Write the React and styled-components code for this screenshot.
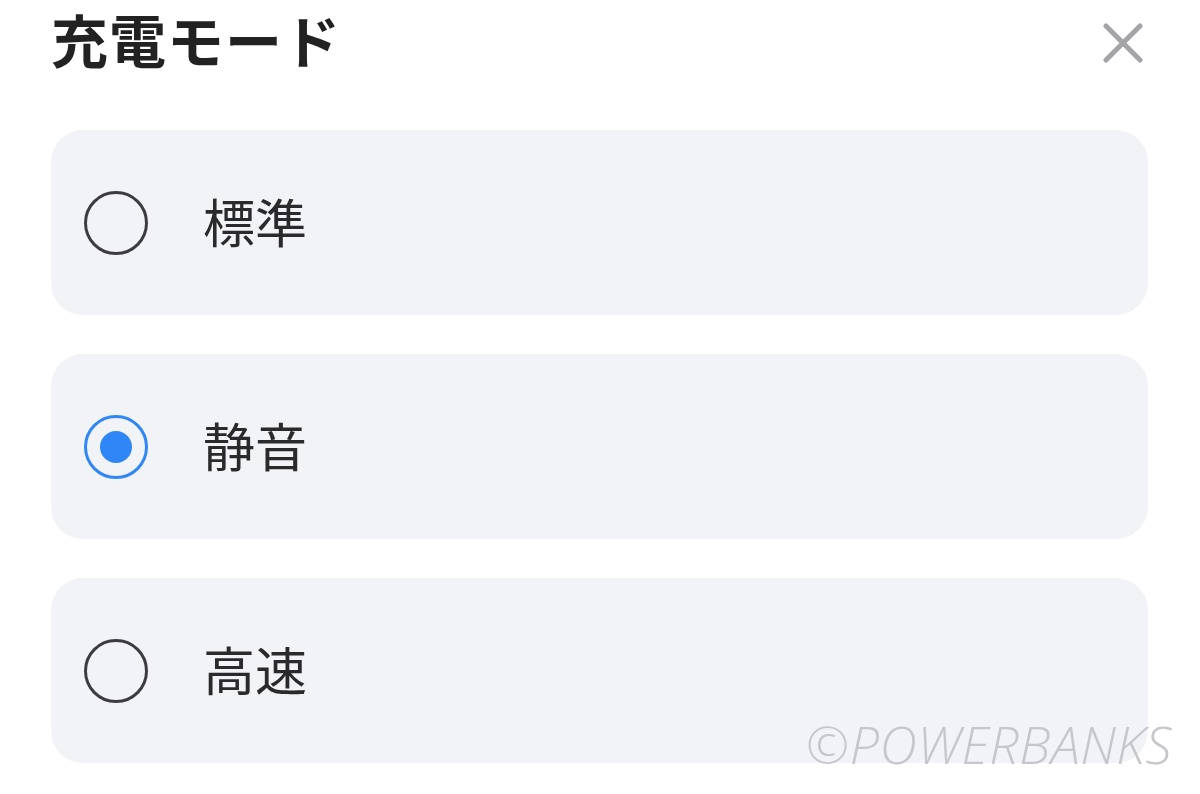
import React from "react";
import styled, { createGlobalStyle } from "styled-components";

const Global = createGlobalStyle`
  html, body { margin: 0; padding: 0; background: #ffffff; }
  body { font-family: "Noto Sans CJK JP", "Noto Sans", sans-serif; }
`;

const Page = styled.div`
  position: relative;
  width: 1200px;
  height: 794px;
  overflow: hidden;
  background: #ffffff;
  box-sizing: border-box;
  padding: 0 52px 0 51px;
`;

const Header = styled.div`
  display: flex;
  align-items: flex-start;
  justify-content: space-between;
  height: 130px;
  padding-top: 4px;
  box-sizing: border-box;
`;

const Title = styled.h1`
  margin: 0;
  font-size: 57px;
  line-height: 1.2;
  font-weight: 700;
  color: #222222;
  letter-spacing: 1px;
`;

const CloseButton = styled.button`
  border: 0;
  background: transparent;
  padding: 0;
  margin: 17px 3px 0 0;
  width: 44px;
  height: 44px;
  display: flex;
  align-items: center;
  justify-content: center;
  cursor: pointer;
`;

const List = styled.div`
  display: flex;
  flex-direction: column;
  gap: 39px;
`;

const Option = styled.label`
  display: flex;
  align-items: center;
  height: 185px;
  border-radius: 32px;
  background: #f2f3f7;
  padding-left: 33px;
  box-sizing: border-box;
  gap: 55px;
  cursor: pointer;
`;

const Radio = styled.span`
  width: 64px;
  height: 64px;
  border-radius: 50%;
  box-sizing: border-box;
  border: 3px solid ${(p) => (p.$checked ? "#2f86f6" : "#3c3c40")};
  display: flex;
  align-items: center;
  justify-content: center;
  flex-shrink: 0;
  &::after {
    content: "";
    display: ${(p) => (p.$checked ? "block" : "none")};
    width: 32px;
    height: 32px;
    border-radius: 50%;
    background: #2f86f6;
  }
`;

const Label = styled.span`
  font-size: 52px;
  line-height: 1;
  color: #2a2a2c;
  font-weight: 400;
  margin-top: -4px;
`;

const Watermark = styled.div`
  position: absolute;
  right: 28px;
  bottom: 24px;
  font-family: "Open Sans", "Liberation Sans", sans-serif;
  font-style: italic;
  font-weight: 300;
  font-size: 52px;
  line-height: 1;
  color: #c6c7cb;
  letter-spacing: 0.5px;
  pointer-events: none;
`;

const options = [
  { id: "standard", label: "標準" },
  { id: "silent", label: "静音" },
  { id: "fast", label: "高速" },
];

export default function App() {
  const [value, setValue] = React.useState("silent");
  return (
    <>
      <Global />
      <Page>
        <Header>
          <Title>充電モード</Title>
          <CloseButton aria-label="close">
            <svg width="40" height="40" viewBox="0 0 40 40">
              <path
                d="M3 3 L37 37 M37 3 L3 37"
                stroke="#a3a3a8"
                strokeWidth="5"
                strokeLinecap="round"
                fill="none"
              />
            </svg>
          </CloseButton>
        </Header>
        <List>
          {options.map((o) => (
            <Option key={o.id} onClick={() => setValue(o.id)}>
              <Radio $checked={value === o.id} />
              <Label>{o.label}</Label>
            </Option>
          ))}
        </List>
        <Watermark>©POWERBANKS</Watermark>
      </Page>
    </>
  );
}
